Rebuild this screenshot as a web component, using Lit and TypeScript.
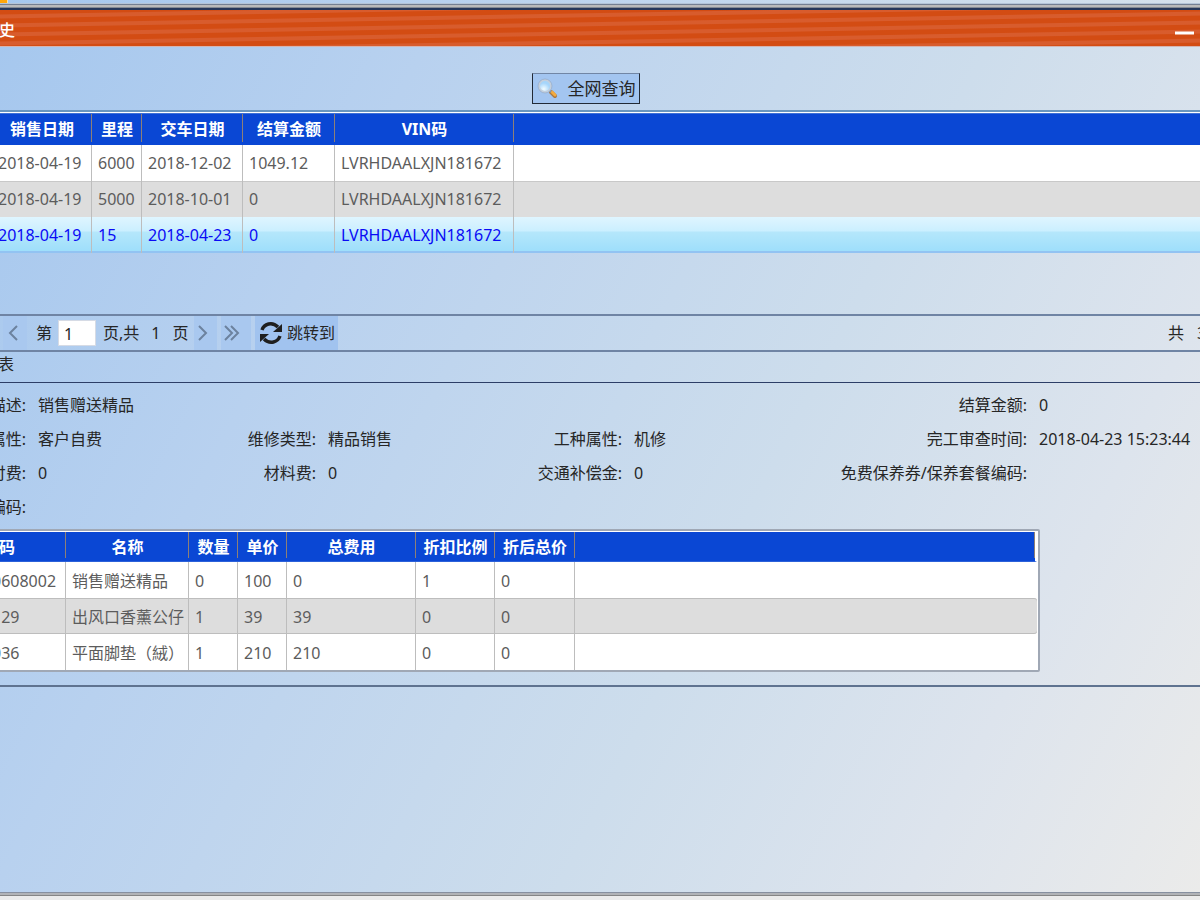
import { LitElement, html, css } from "lit";
import { customElement } from "lit/decorators.js";
import { classMap } from "lit/directives/class-map.js";

const visits = [
  ["2018-04-19", "6000", "2018-12-02", "1049.12", "LVRHDAALXJN181672"],
  ["2018-04-19", "5000", "2018-10-01", "0", "LVRHDAALXJN181672"],
  ["2018-04-19", "15", "2018-04-23", "0", "LVRHDAALXJN181672"],
];

const items = [
  ["0608002", "销售赠送精品", "0", "100", "0", "1", "0"],
  ["\u200729", "出风口香薰公仔", "1", "39", "39", "0", "0"],
  ["036", "平面脚垫（絨）", "1", "210", "210", "0", "0"],
];

const details: [string, string][] = [
  ["描述:", "销售赠送精品"], ["", ""], ["", ""], ["结算金额:", "0"],
  ["属性:", "客户自费"], ["维修类型:", "精品销售"], ["工种属性:", "机修"], ["完工审查时间:", "2018-04-23 15:23:44"],
  ["付费:", "0"], ["材料费:", "0"], ["交通补偿金:", "0"], ["免费保养券/保养套餐编码:", ""],
  ["编码:", ""], ["", ""], ["", ""], ["", ""],
];

@customElement("app-root")
export class AppRoot extends LitElement {
  static styles = css`
    :host {
      display: flex;
      flex-direction: column;
      min-height: 100vh;
      box-sizing: border-box;
      overflow: hidden;
      font: 16px/20px "Noto Sans", "Noto Sans CJK SC", sans-serif;
      color: #262626;
      background: linear-gradient(117deg, #a5c7ee 0%, #b8d1ef 27%, #cdddec 61%, #dde4ed 82%, #ebebea 100%);
    }
    * { box-sizing: border-box; }
    button, input { font: inherit; color: inherit; margin: 0; border: 0; border-radius: 0; }
    button { padding: 0; display: flex; align-items: center; justify-content: center; background: #a3c5f0; }
    .frame-top { height: 10px; background: linear-gradient(#0000 0 3px, #b4c4d8 3px 4px, #747f92 4px 5px, #bababb 5px 7px, #848a94 7px 8px, #26375b 8px); }
    .tab { width: 8px; height: 3px; background: #ffa60a; border-right: 1px solid #ffe0a0; }
    .title {
      display: flex; align-items: center; justify-content: space-between;
      height: 37px; padding: 4px 5px 0 0;
      border-bottom: 1px solid #d5b5b2; color: #fff;
      background: repeating-linear-gradient(179deg, #d34c13 0 4px, #d85c2d 5px 8px, #d34c13 9px);
    }
    .title h1 { margin: 0 0 0 -1px; font-size: 16px; font-weight: 500; line-height: 20px; }
    .minimize { width: 20px; height: 20px; align-items: flex-end; padding-bottom: 5px; background: none; color: #fff; }
    .minimize svg { display: block; }
    .query { display: flex; justify-content: center; padding: 26px 28px 6px 0; }
    .query button { width: 108px; height: 31px; border: 1px solid #222a36; border-top-color: #7186a5; gap: 9px; font-size: 17px; }
    table { width: 100%; table-layout: fixed; border-collapse: separate; border-spacing: 0; }
    th {
      color: #fff; font-weight: 700; padding: 0; text-align: center;
      background: linear-gradient(#8d8077, #8d8077) right top / 1px calc(100% - 3px) no-repeat #0a47d4;
    }
    td { height: 36px; padding: 0 6px; color: #5c5c5c; white-space: nowrap; border-right: 1px solid #bdbdbd; }
    td:last-child { border-right: 0; }
    .alt td { background: #ddd; box-shadow: inset 0 1px #c8c8c8; }
    .visits { border-top: 2px solid #6996bf; padding-top: 1px; background: #fff; }
    .visits table { width: calc(100% + 8px); margin-left: -8px; }
    .visits th { height: 32px; padding-bottom: 2px; border-top: 1px solid #3f72d6; }
    .visits th:last-child { background: #0a47d4; }
    .visits .picked td {
      color: #0a0af5; box-shadow: inset 0 -2px #92c3f2;
      background: linear-gradient(#dff5ff 0, #cbefff 14px, #b5e7fb 15px, #9cdefb);
    }
    .pager { display: flex; align-items: center; height: 38px; margin-top: 61px; border: solid #6f84a4; border-width: 2px 0; }
    .pager button { height: 34px; color: #6c829e; background: #a9c8ef; }
    .pager svg { flex: none; }
    .pager .prev { width: 24px; margin: 0 9px 0 3px; padding-right: 5px; }
    .pager input { width: 38px; height: 26px; margin: 0 7px 0 6px; padding: 2px 5px 0; background: #fff; border: 1px solid #d6dbe5; }
    .pages { margin: 0 12px; }
    .pager .next { width: 23px; margin: 0 4px 0 6px; padding-right: 8px; }
    .pager .last { width: 30px; margin-right: 4px; padding-right: 8px; }
    .pager .jump { width: 83px; color: #262626; gap: 4px; background: #a1c3ef; white-space: nowrap; }
    .total { display: flex; gap: 13px; width: 32px; margin-left: auto; }
    .caption { height: 31px; padding-top: 2px; border-bottom: 1px solid #2c3e67; font-size: 16px; font-weight: 400; margin: 0 0 0 -2px; line-height: 20px; }
    .details {
      display: grid; margin: 5px 0; grid-auto-rows: 34px; align-items: center; white-space: nowrap;
      grid-template-columns: minmax(0, 26fr) minmax(0, 174fr) minmax(0, 116fr) minmax(0, 184fr) minmax(0, 122fr) minmax(0, 178fr) minmax(0, 227fr) minmax(0, 173fr);
    }
    .label { display: flex; justify-content: flex-end; }
    .value { padding-left: 12px; }
    .lower { border-bottom: 2px solid #5f7390; padding: 0 160px 13px 0; }
    .items { margin-left: -14px; border: 2px solid #a0a8b5; border-radius: 2px; padding: 1px 1px 0 0; background: #fff; }
    .items th { height: 30px; border-bottom: 1px solid #2c61d9; }
    .items td { padding-top: 2px; }
    .items td:first-child { padding-left: 4px; }
    .items th:first-child { text-align: left; padding-left: 11px; }
    .items th:last-child { border-right: 2px solid #fff; }
    .items .alt td { box-shadow: inset 0 1px #bdbdbd, inset 0 -1px #bdbdbd; }
    .items .alt td:last-child { border-radius: 0 3px 3px 0; }
    .status { margin-top: auto; height: 8px; background: linear-gradient(#8790a0 0 1px, #b1b3b7 1px 3px, #858585 3px 4px, #ebebeb 4px); }
  `;

  private renderRows(rows: string[][], picked = -1) {
    return rows.map(
      (row, i) => html`<tr class=${classMap({ alt: i === 1, picked: i === picked })}>
        ${row.map((cell) => html`<td>${cell}</td>`)}<td></td>
      </tr>`,
    );
  }

  private renderTable(widths: number[], heads: string[], rows: string[][], picked = -1) {
    return html`<table>
      <colgroup>${widths.map((w) => html`<col style="width:${w}px" />`)}<col /></colgroup>
      <thead><tr>${heads.map((h) => html`<th>${h}</th>`)}<th></th></tr></thead>
      <tbody>${this.renderRows(rows, picked)}</tbody>
    </table>`;
  }

  render() {
    return html`
      <div class="frame-top"><div class="tab"></div></div>
      <header class="title">
        <h1>史</h1>
        <button class="minimize" aria-label="最小化">
          <svg width="20" height="4" viewBox="0 0 20 4"><path d="M0 2h19" stroke="currentColor" stroke-width="3" /></svg>
        </button>
      </header>
      <div class="query">
        <button>
          <svg width="22" height="22" viewBox="0 0 22 22">
            <defs><radialGradient id="lens" cx=".4" cy=".75"><stop offset="0" stop-color="#f2fcff" /><stop offset="1" stop-color="#a5d5fb" /></radialGradient></defs>
            <path d="M14 14l4 4" stroke="#a97740" stroke-width="4" stroke-linecap="round" />
            <path d="M15 14l3 3" stroke="#f4aa3d" stroke-width="3" stroke-linecap="round" />
            <path d="M12 12l2 2" stroke="#8295af" stroke-width="2" />
            <circle cx="8" cy="8" r="6" fill="url(#lens)" stroke="#c3cfdd" stroke-width="2" />
            <circle cx="8" cy="8" r="7" fill="none" stroke="#8da5c4" stroke-width=".6" />
          </svg>
          <span>全网查询</span>
        </button>
      </div>
      <section class="visits">
        ${this.renderTable([100, 50, 101, 92, 179], ["销售日期", "里程", "交车日期", "结算金额", "VIN码"], visits, 2)}
      </section>
      <nav class="pager">
        <button class="prev" aria-label="上一页">
          <svg width="12" height="16" viewBox="0 0 12 16" fill="none" stroke="currentColor" stroke-width="2"><path d="M10 1L3 8l7 7" /></svg>
        </button>
        <label for="page">第</label>
        <input id="page" type="text" value="1" />
        <span>页,共</span><span class="pages">1</span><span>页</span>
        <button class="next" aria-label="下一页">
          <svg width="12" height="16" viewBox="0 0 12 16" fill="none" stroke="currentColor" stroke-width="2"><path d="M3 1l7 7-7 7" /></svg>
        </button>
        <button class="last" aria-label="末页">
          <svg width="16" height="16" viewBox="0 0 16 16" fill="none" stroke="currentColor" stroke-width="2"><path d="M1 1l7 7-7 7M7 1l7 7-7 7" /></svg>
        </button>
        <button class="jump">
          <svg width="24" height="24" viewBox="0 0 24 24">
            <g fill="none" stroke="#1f1f1f" stroke-width="3.4"><path d="M3 9C5 3 13 0 19 6" /><path d="M21 15C19 21 11 24 5 18" /></g>
            <path d="M23 3v8h-9zM1 21v-8h9z" fill="#1f1f1f" />
          </svg>
          <span>跳转到</span>
        </button>
        <div class="total"><span>共</span><span>3</span></div>
      </nav>
      <h2 class="caption">表</h2>
      <section class="details">
        ${details.map(([l, v]) => html`<span class="label">${l}</span><span class="value">${v}</span>`)}
      </section>
      <section class="lower">
        <div class="items">
          ${this.renderTable([78, 123, 49, 49, 129, 79, 80], ["码", "名称", "数量", "单价", "总费用", "折扣比例", "折后总价"], items)}
        </div>
      </section>
      <footer class="status"></footer>
    `;
  }
}
